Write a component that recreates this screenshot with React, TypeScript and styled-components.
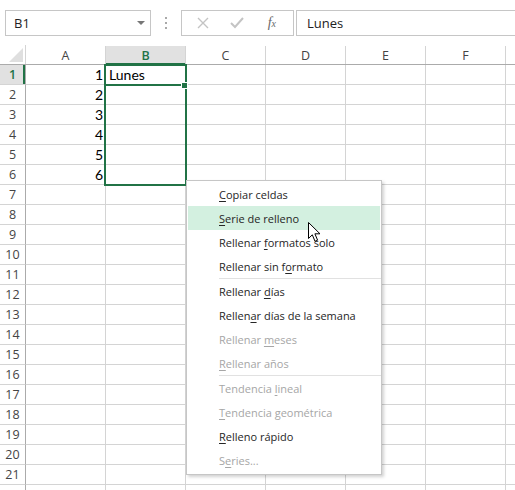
import React from 'react'
import styled, { createGlobalStyle } from 'styled-components'

const GREEN = '#217346'
const UI_FONT = `"Open Sans", "Noto Sans", sans-serif`
const CELL_FONT = `Lato, "Open Sans", sans-serif`

const GlobalStyle = createGlobalStyle`
    html, body {
        margin: 0;
        padding: 0;
        background: #fff;
        overflow: hidden;
    }
    body {
        font-family: ${UI_FONT};
        color: #222;
    }
`

type MenuEntry =
    | { kind: 'sep' }
    | { kind: 'item'; pre: string; key: string; post: string; disabled?: boolean; active?: boolean }

const menu: MenuEntry[] = [
    { kind: 'item', pre: '', key: 'C', post: 'opiar celdas' },
    { kind: 'item', pre: '', key: 'S', post: 'erie de relleno', active: true },
    { kind: 'item', pre: 'Rellenar ', key: 'f', post: 'ormatos solo' },
    { kind: 'item', pre: 'Rellenar sin f', key: 'o', post: 'rmato' },
    { kind: 'sep' },
    { kind: 'item', pre: 'Rellenar ', key: 'd', post: 'ías' },
    { kind: 'item', pre: 'Rellen', key: 'a', post: 'r días de la semana' },
    { kind: 'item', pre: 'Rellenar ', key: 'm', post: 'eses', disabled: true },
    { kind: 'item', pre: '', key: 'R', post: 'ellenar años', disabled: true },
    { kind: 'sep' },
    { kind: 'item', pre: 'Tendencia ', key: 'l', post: 'ineal', disabled: true },
    { kind: 'item', pre: '', key: 'T', post: 'endencia geométrica', disabled: true },
    { kind: 'item', pre: '', key: 'R', post: 'elleno rápido' },
    { kind: 'item', pre: 'S', key: 'e', post: 'ries...', disabled: true },
]

const columns = ['A', 'B', 'C', 'D', 'E', 'F']
const rowCount = 22

const App = () => {
    return (
        <Page>
            <GlobalStyle />
            <FormulaBar>
                <NameBox>
                    <span>B1</span>
                    <Caret />
                </NameBox>
                <Grip>
                    <Dot />
                    <Dot />
                    <Dot />
                </Grip>
                <FxButtons>
                    <FxButton>
                        <svg width="12" height="12" viewBox="0 0 12 12">
                            <path d="M1 1 L11 11 M11 1 L1 11" stroke="#c4c4c4" strokeWidth="1.4" fill="none" />
                        </svg>
                    </FxButton>
                    <FxButton>
                        <svg width="14" height="12" viewBox="0 0 14 12">
                            <path d="M1 6 L5 10 L13 1" stroke="#c4c4c4" strokeWidth="2" fill="none" />
                        </svg>
                    </FxButton>
                    <FxButton>
                        <FxLabel>f<small>x</small></FxLabel>
                    </FxButton>
                </FxButtons>
                <FormulaInput>Lunes</FormulaInput>
            </FormulaBar>

            <Sheet>
                <HeaderRow>
                    <Corner>
                        <svg width="14" height="14" viewBox="0 0 14 14">
                            <path d="M14 0 L14 14 L0 14 Z" fill="#dfdfdf" />
                        </svg>
                    </Corner>
                    {columns.map(c => (
                        <ColHeader key={c} $selected={c === 'B'}>{c}</ColHeader>
                    ))}
                    <ColHeader $selected={false} />
                </HeaderRow>

                {Array.from({ length: rowCount }, (_, i) => i + 1).map(r => (
                    <Row key={r}>
                        {/* the last row is only a sliver at the window's edge */}
                        <RowHeader $selected={r === 1}>{r < rowCount ? r : ''}</RowHeader>
                        <Cell $align="right">{r <= 6 ? r : ''}</Cell>
                        <Cell $align="left">{r === 1 ? 'Lunes' : ''}</Cell>
                        <Cell $align="left" />
                        <Cell $align="left" />
                        <Cell $align="left" />
                        <Cell $align="left" />
                        <Cell $align="left" />
                    </Row>
                ))}

                <Selection />
                <ActiveLine />
                <FillHandle />

                <ContextMenu>
                    {menu.map((m, i) =>
                        m.kind === 'sep' ? (
                            <Separator key={i} />
                        ) : (
                            <MenuItem key={i} $disabled={!!m.disabled} $active={!!m.active}>
                                {m.pre}
                                <u>{m.key}</u>
                                {m.post}
                            </MenuItem>
                        )
                    )}
                </ContextMenu>

                <Pointer width="13" height="21" viewBox="0 0 13 21">
                    <path
                        d="M0.5 0.5 L0.5 16.5 L4.3 12.8 L7 19.3 L9.6 18.2 L6.9 11.8 L12 11.8 Z"
                        fill="#fff"
                        stroke="#000"
                        strokeWidth="1"
                        strokeLinejoin="miter"
                    />
                </Pointer>
            </Sheet>
        </Page>
    )
}

export default App

const Page = styled.div`
    width: 515px;
    height: 490px;
    overflow: hidden;
    background: #fff;
`
const FormulaBar = styled.div`
    height: 45px;
    display: flex;
    align-items: flex-start;
    padding: 10px 0 0 5px;
    box-sizing: border-box;
`
const NameBox = styled.div`
    width: 146px;
    height: 26px;
    box-sizing: border-box;
    border: 1px solid #c6c6c6;
    display: flex;
    align-items: center;
    justify-content: space-between;
    padding: 0 5px 0 8px;
    font-size: 13px;
    color: #222;
`
const Caret = styled.span`
    width: 0;
    height: 0;
    border-left: 4px solid transparent;
    border-right: 4px solid transparent;
    border-top: 4px solid #777;
`
const Grip = styled.div`
    width: 30px;
    height: 26px;
    display: flex;
    flex-direction: column;
    align-items: center;
    justify-content: center;
    gap: 3px;
`
const Dot = styled.span`
    width: 2px;
    height: 2px;
    background: #a9a9a9;
`
const FxButtons = styled.div`
    width: 113px;
    height: 26px;
    box-sizing: border-box;
    border: 1px solid #c6c6c6;
    display: flex;
    align-items: center;
    padding: 0 4px;
    margin-right: 2px;
`
const FxButton = styled.div`
    flex: 1;
    display: flex;
    align-items: center;
    justify-content: center;
`
const FxLabel = styled.span`
    font-family: "Liberation Serif", serif;
    font-style: italic;
    font-size: 14px;
    color: #6a6a6a;
    small {
        font-size: 10px;
    }
`
const FormulaInput = styled.div`
    flex: 1;
    height: 26px;
    box-sizing: border-box;
    border: 1px solid #c6c6c6;
    border-right: none;
    display: flex;
    align-items: center;
    padding-left: 10px;
    font-size: 13px;
    color: #222;
`
const Sheet = styled.div`
    position: relative;
    height: 445px;
    overflow: hidden;
`
const HeaderRow = styled.div`
    display: grid;
    grid-template-columns: 26px repeat(6, 80px) 20px;
    height: 20px;
    box-sizing: border-box;
    border-bottom: 1px solid #ababab;
`
const Corner = styled.div`
    border-right: 1px solid #d4d4d4;
    display: flex;
    align-items: flex-end;
    justify-content: flex-end;
    padding: 0 2px 2px 0;
`
const ColHeader = styled.div<{ $selected: boolean }>`
    margin-top: 1px;
    border-right: 1px solid #d4d4d4;
    display: flex;
    align-items: center;
    justify-content: center;
    font-size: 12.5px;
    color: ${p => (p.$selected ? GREEN : '#444')};
    font-weight: ${p => (p.$selected ? 600 : 400)};
    background: ${p => (p.$selected ? '#e1e1e1' : '#fff')};
    box-shadow: ${p => (p.$selected ? `inset 0 -2px 0 ${GREEN}` : 'none')};
    margin-bottom: ${p => (p.$selected ? '-1px' : '0')};
`
const Row = styled.div`
    display: grid;
    grid-template-columns: 26px repeat(6, 80px) 20px;
    height: 20px;
`
const RowHeader = styled.div<{ $selected: boolean }>`
    box-sizing: border-box;
    border-bottom: 1px solid #d4d4d4;
    border-right: 1px solid #ababab;
    display: flex;
    align-items: center;
    justify-content: center;
    font-size: 12.5px;
    color: ${p => (p.$selected ? GREEN : '#444')};
    font-weight: ${p => (p.$selected ? 600 : 400)};
    background: ${p => (p.$selected ? '#e1e1e1' : '#fff')};
    box-shadow: ${p => (p.$selected ? `inset -2px 0 0 ${GREEN}` : 'none')};
`
const Cell = styled.div<{ $align: 'left' | 'right' }>`
    box-sizing: border-box;
    border-bottom: 1px solid #d4d4d4;
    border-right: 1px solid #d4d4d4;
    display: flex;
    align-items: center;
    justify-content: ${p => (p.$align === 'right' ? 'flex-end' : 'flex-start')};
    padding: 0 2px 0 3px;
    font-family: ${CELL_FONT};
    font-size: 14px;
    color: #000;
`
const Selection = styled.div`
    position: absolute;
    left: 104px;
    top: 19px;
    width: 83px;
    height: 122px;
    box-sizing: border-box;
    border: 2px solid ${GREEN};
    pointer-events: none;
`
const ActiveLine = styled.div`
    position: absolute;
    left: 106px;
    top: 39px;
    width: 78px;
    height: 2px;
    background: ${GREEN};
`
const FillHandle = styled.div`
    position: absolute;
    left: 182px;
    top: 38px;
    width: 5px;
    height: 5px;
    background: ${GREEN};
    border: 1px solid #fff;
    box-sizing: content-box;
    transform: translate(-1px, -1px);
`
const ContextMenu = styled.div`
    position: absolute;
    left: 186px;
    top: 135px;
    width: 196px;
    box-sizing: border-box;
    background: #fff;
    border: 1px solid #c6c6c6;
    box-shadow: 2px 2px 3px rgba(0, 0, 0, 0.18);
    padding: 1px 1px 2px 1px;
`
const MenuItem = styled.div<{ $disabled: boolean; $active: boolean }>`
    height: 24px;
    display: flex;
    align-items: center;
    padding-left: 31px;
    font-size: 11px;
    white-space: pre;
    color: ${p => (p.$disabled ? '#a6a6a6' : '#262626')};
    background: ${p => (p.$active ? '#d3f0e0' : 'transparent')};
    u {
        text-underline-offset: 2px;
    }
`
const Separator = styled.div`
    height: 1px;
    margin: 0 -1px 0 31px;
    background: #e1e1e1;
`
const Pointer = styled.svg`
    position: absolute;
    left: 308px;
    top: 177px;
`
